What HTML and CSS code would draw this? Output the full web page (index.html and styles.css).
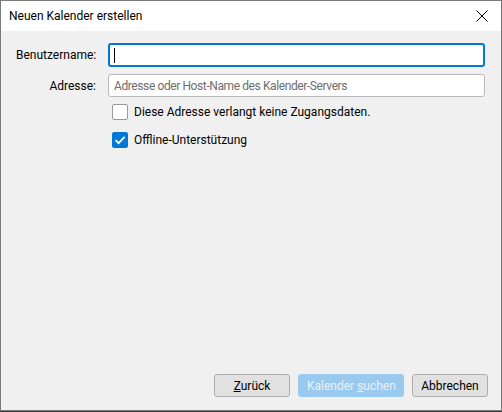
FILE: index.html
```html
<!DOCTYPE html>
<html lang="de">
<head>
    <meta charset="UTF-8">
    <meta name="viewport" content="width=device-width, initial-scale=1.0">
    <title>Neuen Kalender erstellen</title>
    <link rel="stylesheet" href="styles.css">
</head>
<body>
    <div class="dialog">
        <div class="titlebar">
            <span class="title">Neuen Kalender erstellen</span>
            <svg class="close" width="12" height="12" viewBox="0 0 12 12">
                <path d="M0.5 0.5 L11.5 11.5 M11.5 0.5 L0.5 11.5" stroke="#000" stroke-width="1" fill="none"/>
            </svg>
        </div>

        <div class="content">
            <div class="row first">
                <label class="label">Benutzername:</label>
                <div class="field focused"><span class="caret"></span></div>
            </div>
            <div class="row second">
                <label class="label">Adresse:</label>
                <div class="field"><span class="placeholder">Adresse oder Host-Name des Kalender-Servers</span></div>
            </div>

            <div class="check-row nocreds">
                <span class="box"></span>
                <span>Diese Adresse verlangt keine Zugangsdaten.</span>
            </div>
            <div class="check-row offline">
                <span class="box checked">
                    <svg width="16" height="16" viewBox="0 0 16 16">
                        <path d="M3.5 8.2 L6.6 11.2 L12.6 4.8" stroke="#fff" stroke-width="1.8" fill="none"/>
                    </svg>
                </span>
                <span>Offline-Unterstützung</span>
            </div>

            <div class="buttons">
                <button class="btn"><u>Z</u>urück</button>
                <button class="btn primary wide" disabled>Kalender <u>s</u>uchen</button>
                <button class="btn">Abbrechen</button>
            </div>
        </div>
    </div>
</body>
</html>
```

FILE: styles.css
```css
html, body {
    margin: 0;
    padding: 0;
    background: #3a3a3a;
}
body {
    font-family: Roboto, "Noto Sans", sans-serif;
    font-size: 12px;
    color: #000;
}
.dialog {
    width: 502px;
    height: 411px;
    box-sizing: border-box;
    border: 1px solid #7a7a7a;
    display: flex;
    flex-direction: column;
    background: #f0f0f0;
}
.titlebar {
    height: 30px;
    background: #fff;
    display: flex;
    align-items: center;
    padding: 0 13px 0 8px;
    flex-shrink: 0;
}
.title {
    flex: 1;
}
.close {
    display: block;
}
.content {
    flex: 1;
    display: flex;
    flex-direction: column;
    padding: 12px 16px 13px 15px;
}
.row {
    display: flex;
    align-items: center;
}
.row.second {
    margin-top: 7px;
}
.label {
    width: 80px;
    text-align: right;
    margin-right: 12px;
    flex-shrink: 0;
}
.field {
    flex: 1;
    height: 23px;
    box-sizing: border-box;
    background: #fff;
    border: 1px solid #b9b9b9;
    border-radius: 3px;
    display: flex;
    align-items: center;
    padding-left: 5px;
}
.field.focused {
    border: 2px solid #0078d7;
    padding-left: 4px;
    height: 24px;
}
.caret {
    width: 1px;
    height: 15px;
    background: #000;
}
.placeholder {
    color: #6d6d6d;
    letter-spacing: -0.4px;
}
.check-row {
    display: flex;
    align-items: center;
    margin-left: 96px;
    height: 16px;
}
.check-row.nocreds {
    margin-top: 7px;
}
.check-row.offline {
    margin-top: 12px;
}
.box {
    width: 16px;
    height: 16px;
    box-sizing: border-box;
    border: 1px solid #999;
    border-radius: 2px;
    background: #fff;
    margin-right: 6px;
    flex-shrink: 0;
}
.box.checked {
    background: #0078d7;
    border-color: #0078d7;
}
.box svg {
    display: block;
    margin: -1px;
}
.buttons {
    margin-top: auto;
    display: flex;
    justify-content: flex-end;
    gap: 8px;
    margin-right: -3px;
}
.btn {
    font-family: inherit;
    font-size: 12px;
    height: 23px;
    min-width: 76px;
    padding: 0 8px;
    white-space: nowrap;
    background: #e1e1e1;
    border: 1px solid #adadad;
    border-radius: 3px;
    color: #000;
}
.btn.primary {
    background: #99c9ef;
    border-color: #99c9ef;
    color: #e8f2fb;
}
.btn.wide {
    width: 106px;
}
```
